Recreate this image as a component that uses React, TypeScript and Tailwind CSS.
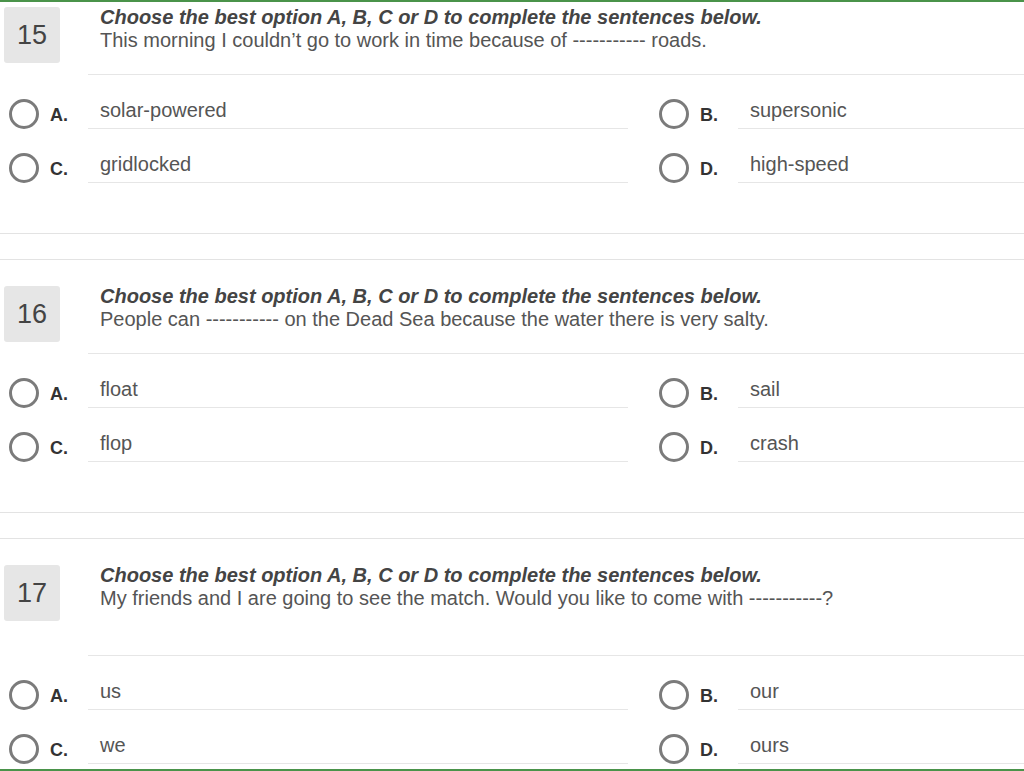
const questions = [
  {
    num: 15,
    sentence: "This morning I couldn’t go to work in time because of ----------- roads.",
    options: ["solar-powered", "supersonic", "gridlocked", "high-speed"],
    tall: false,
  },
  {
    num: 16,
    sentence: "People can ----------- on the Dead Sea because the water there is very salty.",
    options: ["float", "sail", "flop", "crash"],
    tall: false,
  },
  {
    num: 17,
    sentence: "My friends and I are going to see the match. Would you like to come with -----------?",
    options: ["us", "our", "we", "ours"],
    tall: true,
  },
];

const letters = ["A", "B", "C", "D"];

function Option({ letter, text }: { letter: string; text: string }) {
  return (
    <div className="flex h-[54px]">
      <div className="ml-[9px] mt-[24px] h-[30px] w-[30px] shrink-0 rounded-full border-[3px] border-[#7b7b7b]" />
      <div className="ml-[11px] mt-[30px] w-[38px] shrink-0 text-[18px] font-bold leading-[20px] text-[#333]">
        {letter}.
      </div>
      <div className="flex-1 border-b border-[#e6e6e6] pl-[12px] pt-[24px] text-[20px] leading-[23px] text-[#555]">
        {text}
      </div>
    </div>
  );
}

function Question({ q, first }: { q: (typeof questions)[number]; first: boolean }) {
  return (
    <div className={first ? "" : "mt-[25px] border-t border-[#e3e3e3]"}>
      <div className={first ? "flex" : "mt-[21px] flex"}>
        <div className="ml-[4px] mt-[5px] flex h-[56px] w-[56px] shrink-0 items-center justify-center rounded-[3px] bg-[#e6e6e6] text-[27px] text-[#444]">
          {q.num}
        </div>
        <div className="ml-[40px] mt-[4px]">
          <div className="text-[20px] font-bold italic leading-[23px] text-[#444]">
            Choose the best option A, B, C or D to complete the sentences below.
          </div>
          <div className="text-[20px] leading-[23px] text-[#555]">{q.sentence}</div>
        </div>
      </div>
      <div className={q.tall ? "ml-[88px] mt-[34px] border-b border-[#e6e6e6]" : "ml-[88px] mt-[11px] border-b border-[#e6e6e6]"} />
      <div className={q.tall ? "grid grid-cols-[628px_1fr] gap-x-[22px]" : "grid grid-cols-[628px_1fr] gap-x-[22px] border-b border-[#e3e3e3] pb-[50px]"}>
        {q.options.map((o, i) => (
          <Option key={i} letter={letters[i]} text={o} />
        ))}
      </div>
    </div>
  );
}

export default function App() {
  return (
    <div className="h-[771px] w-[1024px] overflow-hidden bg-white" style={{ fontFamily: '"Liberation Sans", Arial, sans-serif' }}>
      <div className="flex h-full flex-col border-y-2 border-[#4a934a]">
        <div className="flex-1 overflow-hidden">
          {questions.map((q, i) => (
            <Question key={q.num} q={q} first={i === 0} />
          ))}
        </div>
      </div>
    </div>
  );
}
